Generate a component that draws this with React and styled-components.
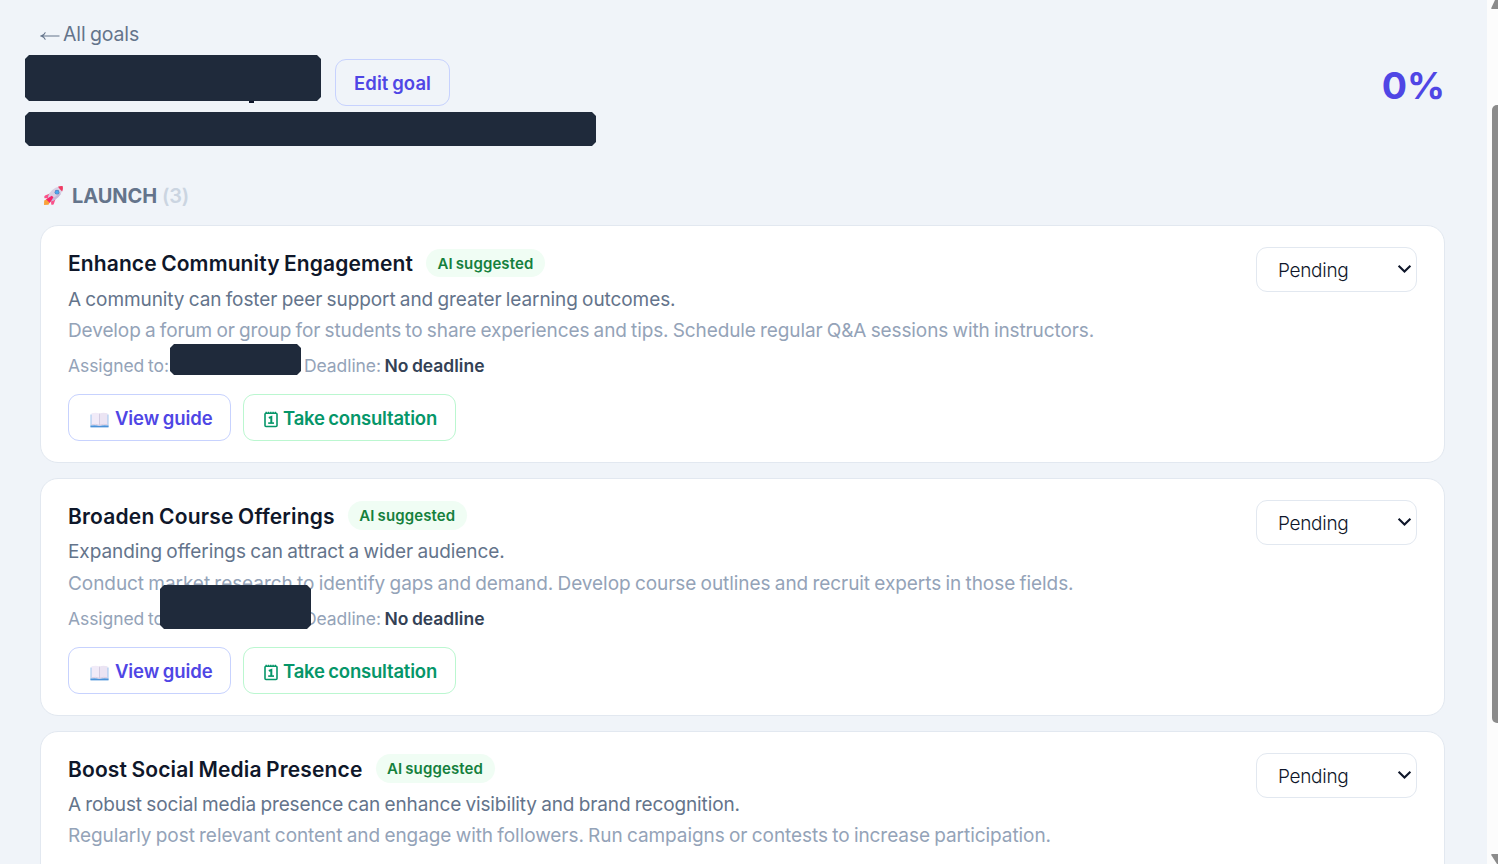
import React from "react";
import styled, { createGlobalStyle } from "styled-components";

const GlobalStyle = createGlobalStyle`
  * { box-sizing: border-box; }
  body {
    margin: 0;
    background: #f0f4f9;
    font-family: Inter, "Liberation Sans", sans-serif;
    word-spacing: -0.06em;
    overflow: hidden;
  }
  button { font-family: inherit; word-spacing: inherit; }
`;

const Page = styled.div`
  display: flex;
  height: 864px;
  overflow: hidden;
`;

const Main = styled.main`
  flex: 1;
  padding: 20px 42px 0 40px;
`;

const BackLink = styled.a`
  display: flex;
  align-items: center;
  height: 28px;
  gap: 3px;
  color: #64748b;
  font-size: 19.5px;
  letter-spacing: -0.13px;

  svg { margin: 3px 0 0 0; }
`;

const Header = styled.header`
  display: flex;
  justify-content: space-between;
  height: 133px;
  padding-top: 7px;
`;

const Heading = styled.div`
  display: flex;
  flex-direction: column;
  gap: 6px;
  margin-left: -15px;
`;

const TitleRow = styled.div`
  display: flex;
  gap: 14px;
  align-items: flex-start;
`;

const Redaction = styled.div`
  position: relative;
  width: ${(p) => p.$width}px;
  height: ${(p) => p.$height}px;
  background: #1f2a3b;
  clip-path: polygon(4px 0, calc(100% - 4px) 0, 100% 4px, 100% calc(100% - 4px), calc(100% - 4px) 100%, 4px 100%, 0 calc(100% - 4px), 0 4px);
`;

const TitleMask = styled.div`
  position: relative;

  &::after {
    content: "";
    position: absolute;
    left: 224px;
    top: 46px;
    width: 5px;
    height: 2px;
    background: #0f172a;
  }
`;

const EditButton = styled.button`
  width: 115px;
  height: 47px;
  margin-top: 4px;
  padding: 0;
  border: 1px solid #c7d2fe;
  border-radius: 11px;
  background: transparent;
  color: #4f46e5;
  font-size: 18.5px;
  font-weight: 600;
  letter-spacing: 0.08px;
`;

const Percent = styled.div`
  height: 60px;
  color: #4f46e5;
  font-size: 37.5px;
  font-weight: 700;
  line-height: 62px;
`;

const PhaseTitle = styled.h2`
  display: flex;
  align-items: center;
  height: 30px;
  margin: 0 0 14px;
  padding-left: 3px;
  color: #64748b;
  font-size: 20px;
  font-weight: 700;
  letter-spacing: -0.06px;

  svg { margin: -1px 8px 0 0; }
`;

const Count = styled.span`
  margin-left: 5px;
  color: #cbd5e1;
  font-weight: 600;
  letter-spacing: -0.3px;
`;

const CardList = styled.div`
  display: flex;
  flex-direction: column;
  gap: 15px;
`;

const Card = styled.article`
  position: relative;
  display: flex;
  justify-content: space-between;
  height: 238px;
  padding: 21px 27px;
  border: 1px solid #e2e8f0;
  border-radius: 18px;
  background: #fff;
`;

const CardBody = styled.div`
  padding-top: 2px;
  white-space: nowrap;
`;

const CardHead = styled.div`
  display: flex;
  align-items: flex-start;
  gap: 13.5px;
  height: 28px;
  margin-bottom: ${(p) => (p.$tight ? 7 : 8)}px;
`;

const TaskTitle = styled.h3`
  margin: 0;
  color: #0f172a;
  font-size: 21px;
  font-weight: 600;
  line-height: 30px;
  letter-spacing: ${(p) => p.$tracking}px;
`;

const Badge = styled.span`
  width: 119px;
  height: ${(p) => (p.$tight ? 29 : 28)}px;
  margin: ${(p) => (p.$tight ? -1 : 0)}px 0 0 -0.5px;
  border-radius: 15px;
  background: #f0fdf4;
  color: #15803d;
  font-size: 15px;
  font-weight: 600;
  line-height: 29px;
  text-align: center;
  letter-spacing: 0.12px;
`;

const Reason = styled.p`
  margin: 0;
  color: #64748b;
  font-size: 19px;
  line-height: 30px;
  letter-spacing: ${(p) => p.$tracking}px;
`;

const Steps = styled(Reason)`
  margin-top: ${(p) => p.$offset}px;
  color: #94a3b8;
  line-height: 31px;
`;

const Meta = styled.div`
  display: flex;
  gap: 3.5px;
  height: 24px;
  margin: 8px 0 16px;
  color: #94a3b8;
  font-size: 17.5px;
  line-height: 24px;
  letter-spacing: -0.07px;

  strong {
    color: #334155;
    font-weight: 600;
    letter-spacing: 0;
  }
`;

const Assignee = styled.span`
  width: 232.5px;
`;

const AssigneeMask = styled(Redaction)`
  position: absolute;
  left: ${(p) => p.$left}px;
  top: ${(p) => p.$top}px;
`;

const Actions = styled.div`
  display: flex;
  gap: 12px;
`;

const ActionButton = styled.button`
  display: flex;
  align-items: center;
  width: ${(p) => (p.$green ? 213 : 163)}px;
  height: 47px;
  padding: 0 0 0 ${(p) => (p.$green ? 20 : 21)}px;
  gap: ${(p) => (p.$green ? 5 : 6)}px;
  border: 1px solid ${(p) => (p.$green ? "#bbf7d0" : "#c7d2fe")};
  border-radius: 11px;
  background: #fff;
  color: ${(p) => (p.$green ? "#059669" : "#4f46e5")};
  font-size: 18.5px;
  font-weight: 600;
  letter-spacing: ${(p) => (p.$green ? -0.2 : -0.09)}px;
  white-space: nowrap;

  svg { flex: none; margin-top: 4px; }
`;

const StatusSelect = styled.button`
  display: flex;
  align-items: center;
  justify-content: space-between;
  width: 161px;
  height: 45px;
  padding: 2px 4.5px 0 21px;
  border: 1px solid #e2e8f0;
  border-radius: 11px;
  background: #fff;
  color: #0f172a;
  font-size: 19px;
  font-weight: 350;
  letter-spacing: -0.3px;

  svg { margin-top: -3px; }
`;

const ScrollTrack = styled.aside`
  display: flex;
  flex-direction: column;
  justify-content: space-between;
  align-items: flex-end;
  width: 11px;
  background: #fcfcfc;
  overflow: hidden;

  svg { display: block; }
`;

const ScrollThumb = styled.div`
  width: 6px;
  height: 618px;
  margin-bottom: 37px;
  border-radius: 5px 0 0 5px;
  background: #8b8b8b;
`;

const ArrowLeft = () => (
  <svg width="20" height="12" viewBox="0 0 20 12" fill="none" stroke="#64748b" strokeWidth="1.2">
    <path d="M1 6H19.5M5.4 2.4C4.6 4.4 3.2 5.4 1 6C3.2 6.6 4.6 7.6 5.4 9.6" />
  </svg>
);

const Rocket = () => (
  <svg width="21" height="21" viewBox="0 0 21 21">
    <path d="M1.2 15.5L5 13.5L7.5 16L5.5 19.8L1 20Z" fill="#f9a23b" />
    <path d="M7 8.5L2 10.5Q.6 11.8 1.6 13.2L6.5 13Z" fill="#f9528a" />
    <path d="M12.5 14L10.8 19Q9.8 20.4 8.2 19.5L8 14.5Z" fill="#f9528a" />
    <path d="M4.5 14.5Q5.5 6.5 12.5 2.8Q16 .8 19.8 1.2Q20.3 5 17.8 9Q14.5 14.5 6.8 16.8Z" fill="#d9d0e4" />
    <path d="M6.8 16.8Q14.5 14.5 17.8 9L16.5 7.8Q12 13 5.8 15.8Z" fill="#c4b8d8" />
    <path d="M15 1.7Q17.5 .8 19.8 1.2Q20.3 3.8 19.2 6.5Q17 4.8 15 1.7Z" fill="#f03a62" />
    <path d="M3 14.2L8.8 10.7L10.5 12.3L6.8 18Z" fill="#f5246c" />
    <circle cx="14" cy="7.2" r="2.4" fill="#5d7fbc" />
    <circle cx="14" cy="7.2" r="1.7" fill="#4aa8ee" />
  </svg>
);

const Book = () => (
  <svg width="19" height="16" viewBox="0 0 19 16">
    <path d="M0.5 2.5H18.5V15.2H0.5Z" fill="#9cc5ee" />
    <path d="M0.5 13.6H18.5V15.3H0.5Z" fill="#4b92d8" />
    <path d="M1.5 1.3Q6.5 .3 9.5 1.6V13.8Q6 12.6 1.5 13.2Z" fill="#f1ebf8" />
    <path d="M17.5 1.3Q12.5 .3 9.5 1.6V13.8Q13 12.6 17.5 13.2Z" fill="#ebe4f3" />
    <path d="M9.5 1.6V13.8" stroke="#d3c9e0" strokeWidth=".9" />
    <path d="M1.5 12.6Q6 11.8 9.5 13.2Q13 11.8 17.5 12.6" stroke="#d5cadf" strokeWidth=".8" fill="none" />
  </svg>
);

const Calendar = () => (
  <svg width="14" height="17" viewBox="0 0 14 17" fill="none" stroke="#059669">
    <rect x="1" y="2.2" width="12" height="13.3" rx="1" strokeWidth="1.6" />
    <path d="M1.5 1.8H12.8" strokeWidth="2" strokeDasharray="1.4 .9" />
    <path d="M4.8 6.9L7.3 6V12" strokeWidth="2" />
    <path d="M4.2 12.1H10" strokeWidth="1.6" />
  </svg>
);

const Chevron = () => (
  <svg width="15" height="10" viewBox="0 0 15 10" fill="none" stroke="#0f172a" strokeWidth="2.1">
    <path d="M1.6 1.8L7.5 7.6L13.4 1.8" />
  </svg>
);

const ScrollArrow = ({ d }) => (
  <svg width="7" height="10" viewBox="0 0 7 10">
    <path d={d} fill="#8b8b8b" />
  </svg>
);

const tasks = [
  {
    title: "Enhance Community Engagement",
    reason: "A community can foster peer support and greater learning outcomes.",
    steps: "Develop a forum or group for students to share experiences and tips. Schedule regular Q&A sessions with instructors.",
    tracking: [0.105, -0.085, -0.108],
    mask: { left: 129, top: 118, width: 131, height: 31 },
    stepsOffset: 0,
  },
  {
    title: "Broaden Course Offerings",
    reason: "Expanding offerings can attract a wider audience.",
    steps: "Conduct market research to identify gaps and demand. Develop course outlines and recruit experts in those fields.",
    tracking: [0.19, -0.07, -0.06],
    mask: { left: 119, top: 106, width: 151, height: 44 },
    tight: true,
    stepsOffset: 1,
  },
  {
    title: "Boost Social Media Presence",
    reason: "A robust social media presence can enhance visibility and brand recognition.",
    steps: "Regularly post relevant content and engage with followers. Run campaigns or contests to increase participation.",
    tracking: [0.136, -0.108, -0.063],
    tight: true,
    stepsOffset: 0,
  },
];

const TaskCard = ({ task }) => (
  <Card>
    <CardBody>
      <CardHead $tight={task.tight}>
        <TaskTitle $tracking={task.tracking[0]}>{task.title}</TaskTitle>
        <Badge $tight={task.tight}>AI suggested</Badge>
      </CardHead>
      <Reason $tracking={task.tracking[1]}>{task.reason}</Reason>
      <Steps $tracking={task.tracking[2]} $offset={task.stepsOffset}>{task.steps}</Steps>
      {task.mask && (
        <>
          <Meta>
            <Assignee>Assigned to:</Assignee>
            <span>Deadline:</span>
            <strong>No deadline</strong>
          </Meta>
          <Actions>
            <ActionButton><Book />View guide</ActionButton>
            <ActionButton $green><Calendar />Take consultation</ActionButton>
          </Actions>
        </>
      )}
    </CardBody>
    <StatusSelect>Pending<Chevron /></StatusSelect>
    {task.mask && (
      <AssigneeMask $left={task.mask.left} $top={task.mask.top} $width={task.mask.width} $height={task.mask.height} />
    )}
  </Card>
);

export default function App() {
  return (
    <Page>
      <GlobalStyle />
      <Main>
        <BackLink><ArrowLeft />All goals</BackLink>
        <Header>
          <Heading>
            <TitleRow>
              <TitleMask><Redaction $width={296} $height={46} /></TitleMask>
              <EditButton>Edit goal</EditButton>
            </TitleRow>
            <Redaction $width={571} $height={34} />
          </Heading>
          <Percent>0%</Percent>
        </Header>
        <PhaseTitle><Rocket />LAUNCH<Count>(3)</Count></PhaseTitle>
        <CardList>
          {tasks.map((task) => <TaskCard key={task.title} task={task} />)}
        </CardList>
      </Main>
      <ScrollTrack>
        <ScrollArrow d="M0.5 9Q0 8.5 .5 7.5L4 0H7V9Z" />
        <ScrollThumb />
        <ScrollArrow d="M0.5 0H7V10H6L.5 1.5Q0 .5 .5 0Z" />
      </ScrollTrack>
    </Page>
  );
}
